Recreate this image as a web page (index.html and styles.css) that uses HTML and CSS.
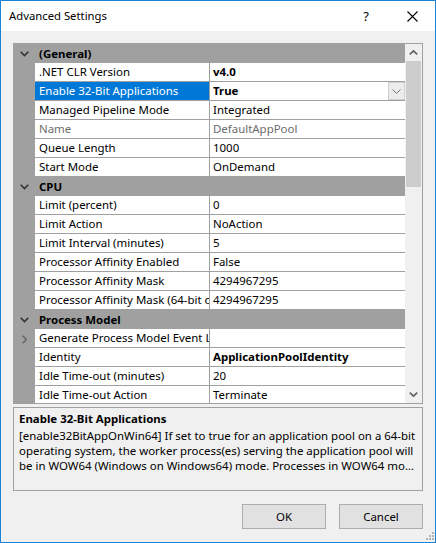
FILE: index.html
```html
<!DOCTYPE html>
<html>
<head>
<meta charset="utf-8">
<link rel="stylesheet" href="styles.css">
</head>
<body>
<div class="window">
  <div class="titlebar">
    <span class="title">Advanced Settings</span>
    <div class="tb-btn help">?</div>
    <div class="tb-btn"><svg width="11" height="11" viewBox="0 0 11 11"><path d="M0.5 0.5 L10.5 10.5 M10.5 0.5 L0.5 10.5" stroke="#000" stroke-width="1.1" fill="none"/></svg></div>
  </div>
  <div class="content">
    <div class="grid">
      <div class="rows">
        <div class="cat"><span class="cat-icon"><svg width="9" height="6" viewBox="0 0 9 6"><path d="M0.7 0.7 L4.5 4.5 L8.3 0.7" stroke="#333" stroke-width="1.6" fill="none"/></svg></span><span class="cat-name">(General)</span></div>
        <div class="row"><span class="margin"></span><span class="name">.NET CLR Version</span><span class="value bold">v4.0</span></div>
        <div class="row selected"><span class="margin"></span><span class="name">Enable 32-Bit Applications</span><span class="value bold"><span class="vtext">True</span><span class="dd"><svg width="9" height="5" viewBox="0 0 9 5"><path d="M0.5 0.5 L4.5 4.5 L8.5 0.5" stroke="#707070" stroke-width="1" fill="none"/></svg></span></span></div>
        <div class="row"><span class="margin"></span><span class="name">Managed Pipeline Mode</span><span class="value">Integrated</span></div>
        <div class="row disabled"><span class="margin"></span><span class="name">Name</span><span class="value">DefaultAppPool</span></div>
        <div class="row"><span class="margin"></span><span class="name">Queue Length</span><span class="value">1000</span></div>
        <div class="row"><span class="margin"></span><span class="name">Start Mode</span><span class="value">OnDemand</span></div>
        <div class="cat"><span class="cat-icon"><svg width="9" height="6" viewBox="0 0 9 6"><path d="M0.7 0.7 L4.5 4.5 L8.3 0.7" stroke="#333" stroke-width="1.6" fill="none"/></svg></span><span class="cat-name">CPU</span></div>
        <div class="row"><span class="margin"></span><span class="name">Limit (percent)</span><span class="value">0</span></div>
        <div class="row"><span class="margin"></span><span class="name">Limit Action</span><span class="value">NoAction</span></div>
        <div class="row"><span class="margin"></span><span class="name">Limit Interval (minutes)</span><span class="value">5</span></div>
        <div class="row"><span class="margin"></span><span class="name">Processor Affinity Enabled</span><span class="value">False</span></div>
        <div class="row"><span class="margin"></span><span class="name">Processor Affinity Mask</span><span class="value">4294967295</span></div>
        <div class="row"><span class="margin"></span><span class="name">Processor Affinity Mask (64-bit option)</span><span class="value">4294967295</span></div>
        <div class="cat"><span class="cat-icon"><svg width="9" height="6" viewBox="0 0 9 6"><path d="M0.7 0.7 L4.5 4.5 L8.3 0.7" stroke="#333" stroke-width="1.6" fill="none"/></svg></span><span class="cat-name">Process Model</span></div>
        <div class="row"><span class="margin"><svg width="5" height="9" viewBox="0 0 5 9"><path d="M0.7 0.7 L4.3 4.5 L0.7 8.3" stroke="#6a6a6a" stroke-width="1.6" fill="none"/></svg></span><span class="name">Generate Process Model Event Log Entry</span><span class="value"></span></div>
        <div class="row"><span class="margin"></span><span class="name">Identity</span><span class="value bold">ApplicationPoolIdentity</span></div>
        <div class="row"><span class="margin"></span><span class="name">Idle Time-out (minutes)</span><span class="value">20</span></div>
        <div class="row"><span class="margin"></span><span class="name">Idle Time-out Action</span><span class="value">Terminate</span></div>
      </div>
      <div class="scrollbar">
        <div class="sb-btn"><svg width="9" height="5" viewBox="0 0 9 5"><path d="M0.8 4.3 L4.5 0.8 L8.2 4.3" stroke="#606060" stroke-width="1.6" fill="none"/></svg></div>
        <div class="sb-track"><div class="thumb"></div></div>
        <div class="sb-btn"><svg width="9" height="5" viewBox="0 0 9 5"><path d="M0.8 0.7 L4.5 4.2 L8.2 0.7" stroke="#606060" stroke-width="1.6" fill="none"/></svg></div>
      </div>
    </div>
    <div class="desc">
      <div class="desc-title">Enable 32-Bit Applications</div>
      <div class="desc-line">[enable32BitAppOnWin64] If set to true for an application pool on a 64-bit</div>
      <div class="desc-line">operating system, the worker process(es) serving the application pool will</div>
      <div class="desc-line">be in WOW64 (Windows on Windows64) mode. Processes in WOW64 mo...</div>
    </div>
    <div class="buttons">
      <div class="btn">OK</div>
      <div class="btn">Cancel</div>
    </div>
  </div>
  <svg class="grip" width="8" height="8" viewBox="0 0 8 8"><g fill="#b4b4b4"><rect x="6" y="0" width="2" height="2"/><rect x="3" y="3" width="2" height="2"/><rect x="6" y="3" width="2" height="2"/><rect x="0" y="6" width="2" height="2"/><rect x="3" y="6" width="2" height="2"/><rect x="6" y="6" width="2" height="2"/></g></svg>
</div>
</body>
</html>
```
FILE: styles.css
```css
html, body {
  margin: 0;
  padding: 0;
}
body {
  font-family: "Noto Sans", "Open Sans", sans-serif;
  font-size: 11.45px;
  color: #000;
  background: #fff;
}
.window {
  width: 436px;
  height: 543px;
  box-sizing: border-box;
  border: 1px solid #1883d7;
  background: #f0f0f0;
  display: flex;
  flex-direction: column;
  position: relative;
}
.titlebar {
  height: 30px;
  flex: none;
  background: #fff;
  display: flex;
  align-items: center;
}
.title {
  flex: 1;
  padding-left: 8px;
  font-size: 11.3px;
  line-height: 30px;
}
.tb-btn {
  width: 46px;
  height: 30px;
  display: flex;
  align-items: center;
  justify-content: center;
}
.tb-btn.help {
  font-size: 13px;
  padding-bottom: 1px;
  box-sizing: border-box;
}
.content {
  flex: 1;
  padding: 12px 12px 0 12px;
  display: flex;
  flex-direction: column;
}
.grid {
  height: 361px;
  flex: none;
  box-sizing: border-box;
  border: 1px solid #a0a0a0;
  display: flex;
}
.rows {
  flex: 1;
  overflow: hidden;
  background: #a0a0a0;
}
.cat {
  height: 19px;
  display: flex;
  align-items: center;
  font-weight: bold;
  line-height: 19px;
}
.cat-icon {
  width: 21px;
  flex: none;
  display: flex;
  justify-content: center;
  padding-top: 1px;
}
.cat-name {
  padding-left: 4px;
}
.row {
  height: 19px;
  display: flex;
}
.row .margin {
  width: 21px;
  flex: none;
  display: flex;
  align-items: center;
  justify-content: center;
  height: 18px;
  padding-top: 2px;
  box-sizing: border-box;
}
.name {
  width: 174px;
  flex: none;
  height: 18px;
  line-height: 18px;
  background: #fff;
  padding-left: 4px;
  box-sizing: border-box;
  white-space: nowrap;
  overflow: hidden;
}
.value {
  flex: 1;
  margin-left: 1px;
  height: 18px;
  line-height: 18px;
  background: #fff;
  padding-left: 3px;
  white-space: nowrap;
  overflow: hidden;
  display: flex;
}
.bold {
  font-weight: bold;
}
.vtext {
  flex: 1;
}
.dd {
  width: 17px;
  height: 18px;
  box-sizing: border-box;
  border: 1px solid #cfcfcf;
  background: #ececec;
  display: flex;
  align-items: center;
  justify-content: center;
}
.selected .name {
  background: #0078d7;
  color: #fff;
}
.disabled .name,
.disabled .value {
  color: #6d6d6d;
}
.scrollbar {
  width: 17px;
  flex: none;
  background: #f0f0f0;
  display: flex;
  flex-direction: column;
}
.sb-btn {
  height: 17px;
  flex: none;
  display: flex;
  align-items: center;
  justify-content: center;
}
.sb-track {
  flex: 1;
  padding: 0 1px;
}
.thumb {
  height: 126px;
  background: #cdcdcd;
}
.desc {
  margin-top: 3px;
  height: 84px;
  flex: none;
  box-sizing: border-box;
  border: 1px solid #a0a0a0;
  padding: 1px 5px 0 5px;
  overflow: hidden;
}
.desc-title {
  font-weight: bold;
  line-height: 19px;
}
.desc-line {
  line-height: 15px;
  white-space: nowrap;
}
.buttons {
  margin-top: 13px;
  display: flex;
  justify-content: flex-end;
  gap: 13px;
}
.btn {
  width: 84px;
  height: 25px;
  box-sizing: border-box;
  border: 1px solid #adadad;
  background: #e1e1e1;
  display: flex;
  align-items: center;
  justify-content: center;
}
.grip {
  position: absolute;
  right: 1px;
  bottom: 2px;
}
```
